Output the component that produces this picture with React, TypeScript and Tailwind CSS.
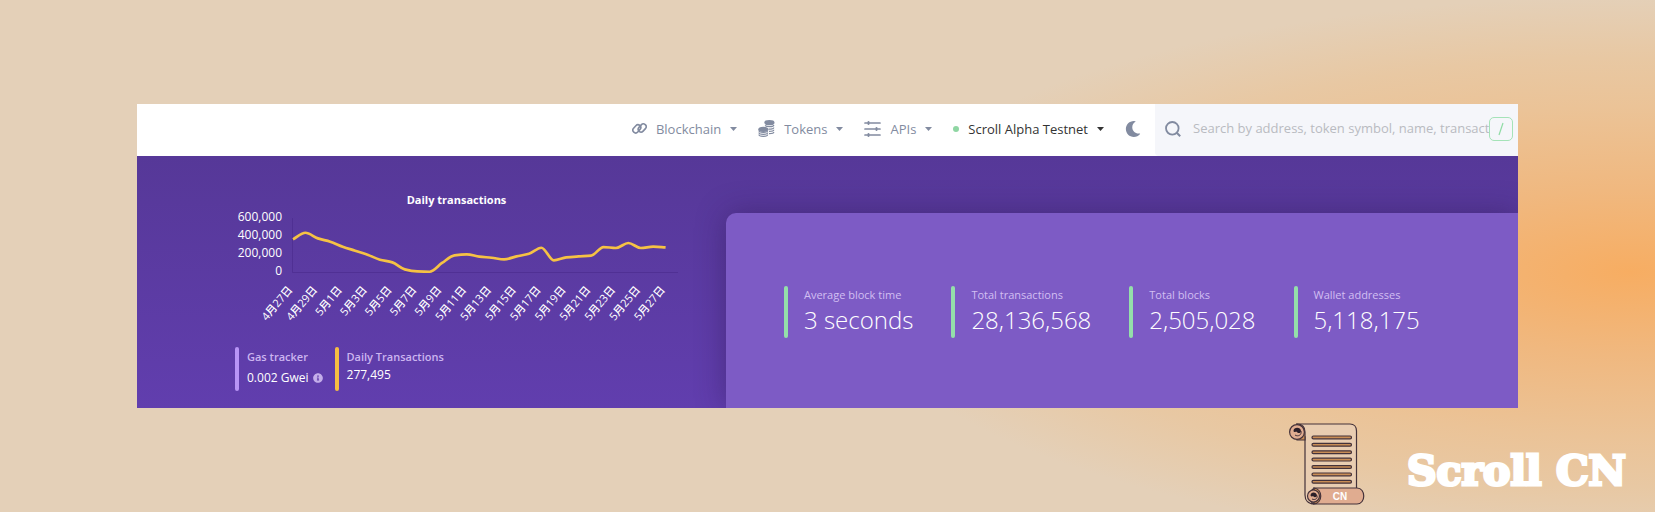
import React from "react";
import { FaMoon, FaInfoCircle } from "react-icons/fa";

const daily = [
  366, 440, 377, 340, 284, 239, 194, 138, 108, 30, 7, 3, 101, 187, 198, 172, 160, 142, 175, 205, 272, 131, 164, 175,
  183, 280, 269, 325, 269, 284, 277,
];

const dates = [
  "4月27日", "4月29日", "5月1日", "5月3日", "5月5日", "5月7日", "5月9日", "5月11日",
  "5月13日", "5月15日", "5月17日", "5月19日", "5月21日", "5月23日", "5月25日", "5月27日",
];

const stats = [
  { label: "Average block time", value: "3 seconds" },
  { label: "Total transactions", value: "28,136,568" },
  { label: "Total blocks", value: "2,505,028" },
  { label: "Wallet addresses", value: "5,118,175" },
];

const STEP = 12.42;
const px = (i: number) => 73 + i * STEP;
const py = (v: number) => 87 - (v / 600) * 53.5;

// Monotone cubic interpolation through the daily values.
function linePath(values: number[]) {
  const y = values.map(py);
  const slope = y.slice(1).map((v, i) => (v - y[i]) / STEP);
  const m = y.map((_, i) => {
    if (i === 0) return slope[0];
    if (i === y.length - 1) return slope[i - 1];
    const a = slope[i - 1];
    const b = slope[i];
    return a * b <= 0 ? 0 : (2 * a * b) / (a + b);
  });
  let d = `M${px(0)} ${y[0]}`;
  for (let i = 1; i < y.length; i++) {
    const h = STEP / 3;
    d += `C${px(i - 1) + h} ${y[i - 1] + m[i - 1] * h} ${px(i) - h} ${y[i] - m[i] * h} ${px(i)} ${y[i]}`;
  }
  return d;
}

function Caret() {
  return (
    <svg width="7" height="4" viewBox="0 0 7 4" fill="currentColor" aria-hidden="true">
      <path d="M0 0h7L3.5 4z" />
    </svg>
  );
}

function LinkIcon() {
  return (
    <svg width="15" height="15" viewBox="0 0 15 15" fill="none" stroke="currentColor" strokeWidth="1.6" aria-hidden="true">
      <rect x="0.3" y="5" width="9" height="5.6" rx="2.8" transform="rotate(-48 4.8 7.8)" />
      <rect x="5.7" y="4.2" width="9" height="5.6" rx="2.8" transform="rotate(-48 10.2 7)" />
    </svg>
  );
}

function CoinsIcon() {
  return (
    <svg width="17" height="17" viewBox="0 0 17 17" aria-hidden="true">
      <g fill="none" stroke="currentColor" strokeWidth="1.2">
        <path d="M11 13.6c2.500 0 4.800-.6 4.800-1.600M11 11.400c2.500 0 4.800-.6 4.800-1.600M10.500 9.200c2.700 0 5.300-.6 5.300-1.700M7 5.500c1 .9 3 1.200 4.600 1.200 2.400 0 4.200-.7 4.200-1.700M6.900 3.300c.6.900 2.500 1.400 4.500 1.400 2.400 0 4.400-.8 4.400-1.800" />
        <path d="M.9 10.600c0 1 2 1.800 4.400 1.800s4.400-.8 4.400-1.800M.9 12.600c0 1 2 1.800 4.400 1.800s4.400-.8 4.400-1.800M.9 14.500c0 1 2 1.800 4.400 1.800s4.400-.8 4.400-1.800" />
      </g>
      <g fill="currentColor">
        <ellipse cx="11.400" cy="2.300" rx="5" ry="2.200" />
        <ellipse cx="5.300" cy="9.300" rx="5" ry="2.600" />
      </g>
    </svg>
  );
}

function ApiIcon() {
  return (
    <svg width="17" height="16" viewBox="0 0 17 16" fill="none" stroke="currentColor" strokeWidth="1.7" strokeLinecap="round" aria-hidden="true">
      <path d="M1 2h15M1 8h15M1 14h15" />
      <path d="M4.500 1v2M12.500 7v2M4.500 13v2" strokeWidth="2" />
    </svg>
  );
}

function NavItem({ icon, label, active }: { icon: React.ReactNode; label: string; active?: boolean }) {
  return (
    <button
      type="button"
      className={`flex items-center gap-[9px] whitespace-nowrap text-[13px] leading-5 ${active ? "font-medium text-[#333333]" : "text-[#828ba0]"}`}
    >
      {icon}
      {label}
      <Caret />
    </button>
  );
}

function Header() {
  return (
    <header className="flex h-[52px] items-stretch justify-end bg-white">
      <nav className="flex items-center gap-[21px] pr-[14px] pb-[3px]">
        <NavItem icon={<LinkIcon />} label="Blockchain" />
        <NavItem icon={<CoinsIcon />} label="Tokens" />
        <NavItem icon={<ApiIcon />} label="APIs" />
        <NavItem icon={<span className="size-[6px] rounded-full bg-[#8fd6a3]" />} label="Scroll Alpha Testnet" active />
        <button type="button" aria-label="Dark mode" className="text-[#828ba0]">
          <FaMoon size={16} />
        </button>
      </nav>
      <div className="flex w-[363px] items-center rounded-bl-[4px] bg-[#f5f6fa] pr-[5px] pb-[3px] pl-[10px]">
        <svg width="16" height="16" viewBox="0 0 16 16" fill="none" stroke="#828ba0" strokeWidth="1.8" className="shrink-0" aria-hidden="true">
          <circle cx="7.300" cy="7.300" r="6.300" />
          <path d="M12 12l3.200 3.200" strokeWidth="2" />
        </svg>
        <input
          type="text"
          aria-label="Search"
          placeholder="Search by address, token symbol, name, transaction hash"
          className="ml-3 min-w-0 flex-1 bg-transparent pb-[2px] text-[13px] leading-5 outline-none placeholder:text-[#b9bbc1]"
        />
        <kbd className="flex size-6 shrink-0 items-center justify-center rounded-[5px] border border-[#a5e3b8] font-[inherit]">
          <svg width="6" height="14" viewBox="0 0 6 14" stroke="#8fdca5" strokeWidth="1.200" role="img" aria-label="Slash key">
            <path d="M5 1L1 13" />
          </svg>
        </kbd>
      </div>
    </header>
  );
}

function Chart() {
  return (
    <svg viewBox="0 0 470 145" className="block h-auto w-[470px] max-w-full fill-white" role="img" aria-label="Daily transactions chart">
      <text x="236.500" y="19" textAnchor="middle" fontSize="11" fontWeight="700">
        Daily transactions
      </text>
      <g textAnchor="end" fontSize="12">
        <text x="62" y="36">600,000</text>
        <text x="62" y="54">400,000</text>
        <text x="62" y="72">200,000</text>
        <text x="62" y="90">0</text>
      </g>
      <path d="M72.500 33v54.500H458" fill="none" stroke="#4c2c8f" strokeOpacity="0.7" />
      <path d={linePath(daily)} fill="none" stroke="#f6c244" strokeWidth="2.700" strokeLinejoin="round" />
      <g textAnchor="end" fontSize="11" fontWeight="500">
        {dates.map((date, i) => (
          <text key={date} transform={`translate(${px(i * 2)} 105) rotate(-50)`}>
            {date}
          </text>
        ))}
      </g>
    </svg>
  );
}

function ScrollLogo() {
  return (
    <svg width="78" height="84" viewBox="0 0 78 84" stroke="#44323a" strokeWidth="1.200" role="img" aria-label="Scroll CN logo">
      <path d="M8 1h53c4 0 6.500 3 6.500 7v58H24c-4 3-5 12 1 15-6 0-9-4-9-9V14z" fill="#e9cdb1" />
      <path d="M8 1c6 0 8 4 8 8v8H8z" fill="#c98d55" />
      <circle cx="8" cy="9" r="7.400" fill="#e0ac90" />
      <path d="M4.500 8c0-4 7-4.500 7.500 0 0 3-4 2-4 1s-3 1-3.500-1z" fill="#2b1f28" stroke="none" />
      <path d="M12 8c1 4-3 6-6 4" fill="none" strokeWidth="1" />
      <path d="M25 65h43c9 0 9 16 0 16H25z" fill="#e0ac90" />
      <path d="M25 65c9 1 9 15 0 16z" fill="#c98d55" />
      <circle cx="24.500" cy="73" r="6" fill="#e0ac90" />
      <path d="M21.500 72.500c0-4 6-4 6.500 0 0 2-3 2-3.500 1s-2 1-3-1z" fill="#2b1f28" stroke="none" />
      <path d="M28 72.500c1 3-2 5-5 3.500" fill="none" strokeWidth="1" />
      <g fill="#c98d55">
        {[13, 20.400, 27.800, 35.200, 42.600, 50, 57.400].map((y) => (
          <rect key={y} x="23" y={y} width="39.500" height="2.800" rx="1.400" />
        ))}
      </g>
      <text x="51" y="77" textAnchor="middle" fill="white" stroke="none" fontSize="10" fontWeight="700" className="font-['Liberation_Sans_Narrow','Liberation_Sans',sans-serif]">
        CN
      </text>
    </svg>
  );
}

export default function App() {
  return (
    <div className="flex min-h-screen flex-col bg-[#e4d0b8] bg-[radial-gradient(ellipse_790px_275px_at_calc(100%_-_25px)_272px,#f7ad62_0%,#f0b87f_30%,#ebc397_60%,#e8c8a3_78%,#e4d0b8_100%)] pt-[104px] font-['Open_Sans','Noto_Sans_CJK_SC',sans-serif]">
      <div className="mx-[137px]">
        <Header />
        <main className="flex bg-linear-to-b from-[#563898] to-[#613eae]">
          <section className="w-[42.65%] shrink-0 pt-[29px] pb-[17px] pl-[83px]">
            <Chart />
            <div className="mt-[17px] ml-[15px] flex gap-3">
              <div className="flex h-11 gap-2">
                <span className="w-1 rounded-full bg-[#b894f6]" />
                <div className="text-xs leading-5 text-white">
                  <div className="text-[11px] leading-[19px] font-semibold text-[#ccb5f0]">Gas tracker</div>
                  <div className="flex items-center gap-1 pt-[2px]">
                    0.002 Gwei <FaInfoCircle size={10} className="text-[#c4aeea]" />
                  </div>
                </div>
              </div>
              <div className="flex h-11 gap-2">
                <span className="w-1 rounded-full bg-[#f6bd42]" />
                <div className="text-xs leading-[18px] text-white">
                  <div className="text-[11px] leading-[19px] font-semibold text-[#ccb5f0]">Daily Transactions</div>
                  <div>277,495</div>
                </div>
              </div>
            </div>
          </section>
          <div className="flex min-w-0 flex-1 pt-[57px] [clip-path:inset(0_0_0_-40px)]">
            <section className="flex flex-1 items-start gap-[38px] rounded-tl-[10px] bg-[#7d5bc5] pt-[73px] pl-[58px] shadow-[0_0_30px_rgba(40,20,70,0.4)]">
              {stats.map((s) => (
                <div key={s.label} className="flex h-[52px] gap-4">
                  <span className="w-1 rounded-full bg-[#94dfaa]" />
                  <div className="whitespace-nowrap">
                    <div className="text-[11px] leading-[18px] font-medium text-[#d2bff2]">{s.label}</div>
                    <div className="text-2xl leading-8 font-light text-white">{s.value}</div>
                  </div>
                </div>
              ))}
            </section>
          </div>
        </main>
      </div>
      <footer className="flex items-start justify-end gap-10 pt-[15px] pr-[29px]">
        <ScrollLogo />
        <div className="pt-[22px] font-['DejaVu_Serif',serif] text-[41px] leading-[52px] font-bold whitespace-nowrap text-white [-webkit-text-stroke:3px_white]">
          Scroll CN
        </div>
      </footer>
    </div>
  );
}
